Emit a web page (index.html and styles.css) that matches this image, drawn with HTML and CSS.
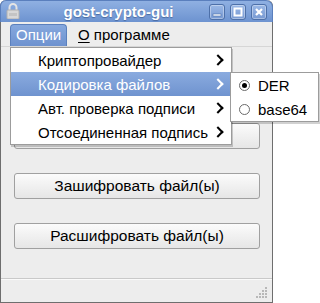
FILE: index.html
```html
<!DOCTYPE html>
<html lang="ru">
<head>
  <meta charset="UTF-8" />
  <title>gost-crypto-gui</title>
  <link rel="stylesheet" href="styles.css">
</head>
<body>
  <div class="window">
    <div class="titlebar">
      <svg class="lock" width="14" height="16" viewBox="0 0 14 16">
        <path d="M3.5 7 V4.5 a3.5 3.5 0 0 1 7 0 V7" fill="none" stroke="#e4e4e4" stroke-width="2"/>
        <rect x="1" y="7" width="12" height="9" rx="1" fill="#d8d8d8" stroke="#b0b0b0"/>
        <rect x="3" y="10" width="8" height="3" fill="#c4c4c4"/>
      </svg>
      <span class="title">gost-crypto-gui</span>
      <div class="wm-buttons">
        <span class="wm-btn"><svg width="16" height="16" viewBox="0 0 16 16"><rect x="4" y="10" width="8" height="2" fill="#fff" stroke="#4a6ea8" stroke-width="0.6"/></svg></span>
        <span class="wm-btn"><svg width="16" height="16" viewBox="0 0 16 16"><rect x="4.5" y="4.5" width="7" height="7" fill="none" stroke="#fff" stroke-width="2"/></svg></span>
        <span class="wm-btn"><svg width="16" height="16" viewBox="0 0 16 16"><path d="M5 5 L11 11 M11 5 L5 11" stroke="#fff" stroke-width="2.2"/></svg></span>
      </div>
    </div>

    <div class="menubar">
      <span class="menubar-item active">Опции</span>
      <span class="menubar-item"><u>О</u> программе</span>
    </div>

    <div class="content">
      <!-- first button is hidden under the open menu -->
      <button class="action"></button>
      <button class="action">Зашифровать файл(ы)</button>
      <button class="action">Расшифровать файл(ы)</button>
    </div>

    <div class="statusbar">
      <svg class="grip" width="11" height="11" viewBox="0 0 11 11" fill="#b8b8b8">
        <rect x="9" y="0" width="2" height="2"/>
        <rect x="6" y="3" width="2" height="2"/><rect x="9" y="3" width="2" height="2"/>
        <rect x="3" y="6" width="2" height="2"/><rect x="6" y="6" width="2" height="2"/><rect x="9" y="6" width="2" height="2"/>
        <rect x="0" y="9" width="2" height="2"/><rect x="3" y="9" width="2" height="2"/><rect x="6" y="9" width="2" height="2"/><rect x="9" y="9" width="2" height="2"/>
      </svg>
    </div>

    <!-- open menu -->
    <ul class="popup">
      <li>Криптопровайдер<span class="chevron"></span></li>
      <li class="selected">Кодировка файлов<span class="chevron"></span></li>
      <li>Авт. проверка подписи<span class="chevron"></span></li>
      <li>Отсоединенная подпись<span class="chevron"></span></li>
    </ul>

    <ul class="submenu">
      <li><span class="radio checked"></span>DER</li>
      <li><span class="radio"></span>base64</li>
    </ul>
  </div>
</body>
</html>
```

FILE: styles.css
```css
body {
  margin: 0;
  background: #fff;
  font-family: "Liberation Sans", Arial, sans-serif;
  font-size: 15px;
  color: #000;
}

.window {
  position: relative;
  width: 273px;
  height: 303px;
  box-sizing: border-box;
  border: 1px solid #6e6e6e;
  border-top: none;
  border-radius: 6px 6px 0 0;
  background: #ededed;
  display: flex;
  flex-direction: column;
}

.titlebar {
  height: 22px;
  margin: 0 -1px;
  border-radius: 6px 7px 0 0;
  background: linear-gradient(#8fb0e2, #6d93d0);
  border: 1px solid #5a7fbd;
  border-bottom: none;
  box-sizing: border-box;
  display: flex;
  align-items: center;
  padding: 0 5px;
}

.lock {
  display: block;
  margin-top: -2px;
}

.title {
  flex: 1;
  text-align: center;
  color: #fff;
  font-weight: bold;
  font-size: 15px;
  text-shadow: 0 1px 1px #4a6aa0;
  margin-left: 8px;
}

.wm-buttons {
  display: flex;
  gap: 5px;
}

.wm-btn {
  width: 16px;
  height: 16px;
  box-sizing: border-box;
  border: 1px solid #4d70a9;
  border-radius: 3px;
  background: linear-gradient(#9ab8e6, #7799d2);
  box-shadow: inset 0 0 0 1px rgba(255, 255, 255, 0.35);
  display: flex;
  align-items: center;
  justify-content: center;
}

.wm-btn svg {
  display: block;
  margin: -1px;
}

.menubar {
  height: 24px;
  display: flex;
  align-items: flex-end;
  padding-left: 9px;
  border-bottom: 1px solid #d6d6d6;
}

.menubar-item {
  height: 22px;
  line-height: 22px;
  padding: 0 6px;
  box-sizing: border-box;
}

.menubar-item + .menubar-item {
  margin-left: 5px;
}

.menubar-item.active {
  width: 57px;
  color: #fff;
  background: linear-gradient(#86a8de, #6e92cf);
  border: 1px solid #5b80bd;
  border-bottom: none;
  border-radius: 4px 4px 0 0;
  line-height: 20px;
  padding: 0 5px;
}

.menubar-item u {
  text-decoration-thickness: 1px;
  text-underline-offset: 2px;
}

.content {
  flex: 1;
  display: flex;
  flex-direction: column;
  gap: 24px;
  padding: 76px 12px 0 13px;
}

.action {
  height: 26px;
  font-family: inherit;
  font-size: 15.5px;
  color: #000;
  background: linear-gradient(#fbfbfb, #e6e6e6);
  border: 1px solid #a0a0a0;
  border-radius: 3px;
  padding: 0;
}

.statusbar {
  height: 24px;
  border-top: 1px solid #c9c9c9;
  box-shadow: inset 0 1px 0 #fafafa;
  display: flex;
  justify-content: flex-end;
  align-items: flex-end;
  padding: 0 5px 4px 0;
  box-sizing: border-box;
}

.grip {
  display: block;
}

.popup,
.submenu {
  position: absolute;
  list-style: none;
  margin: 0;
  padding: 0;
  background: #fff;
  border: 1px solid #9c9c9c;
  box-shadow: 1px 2px 0 rgba(0, 0, 0, 0.18);
}

.popup {
  left: 9px;
  top: 47px;
  width: 220px;
}

.popup li {
  height: 24px;
  display: flex;
  align-items: center;
  padding-left: 27px;
  position: relative;
}

.popup li.selected {
  color: #fff;
  background: linear-gradient(#8aabdf, #6f93cf);
}

.chevron {
  position: absolute;
  right: 9px;
  top: 8px;
  width: 6px;
  height: 6px;
  border-right: 2px solid #000;
  border-top: 2px solid #000;
  transform: rotate(45deg);
}

.selected .chevron {
  border-color: #fff;
}

.submenu {
  left: 229px;
  top: 72px;
  width: 87px;
}

.submenu li {
  height: 24px;
  display: flex;
  align-items: center;
  padding-left: 8px;
  gap: 8px;
}

.radio {
  width: 9px;
  height: 9px;
  border: 1px solid #6a6a6a;
  border-radius: 50%;
  position: relative;
}

.radio.checked::after {
  content: "";
  position: absolute;
  left: 2px;
  top: 2px;
  width: 5px;
  height: 5px;
  border-radius: 50%;
  background: #000;
}
```
